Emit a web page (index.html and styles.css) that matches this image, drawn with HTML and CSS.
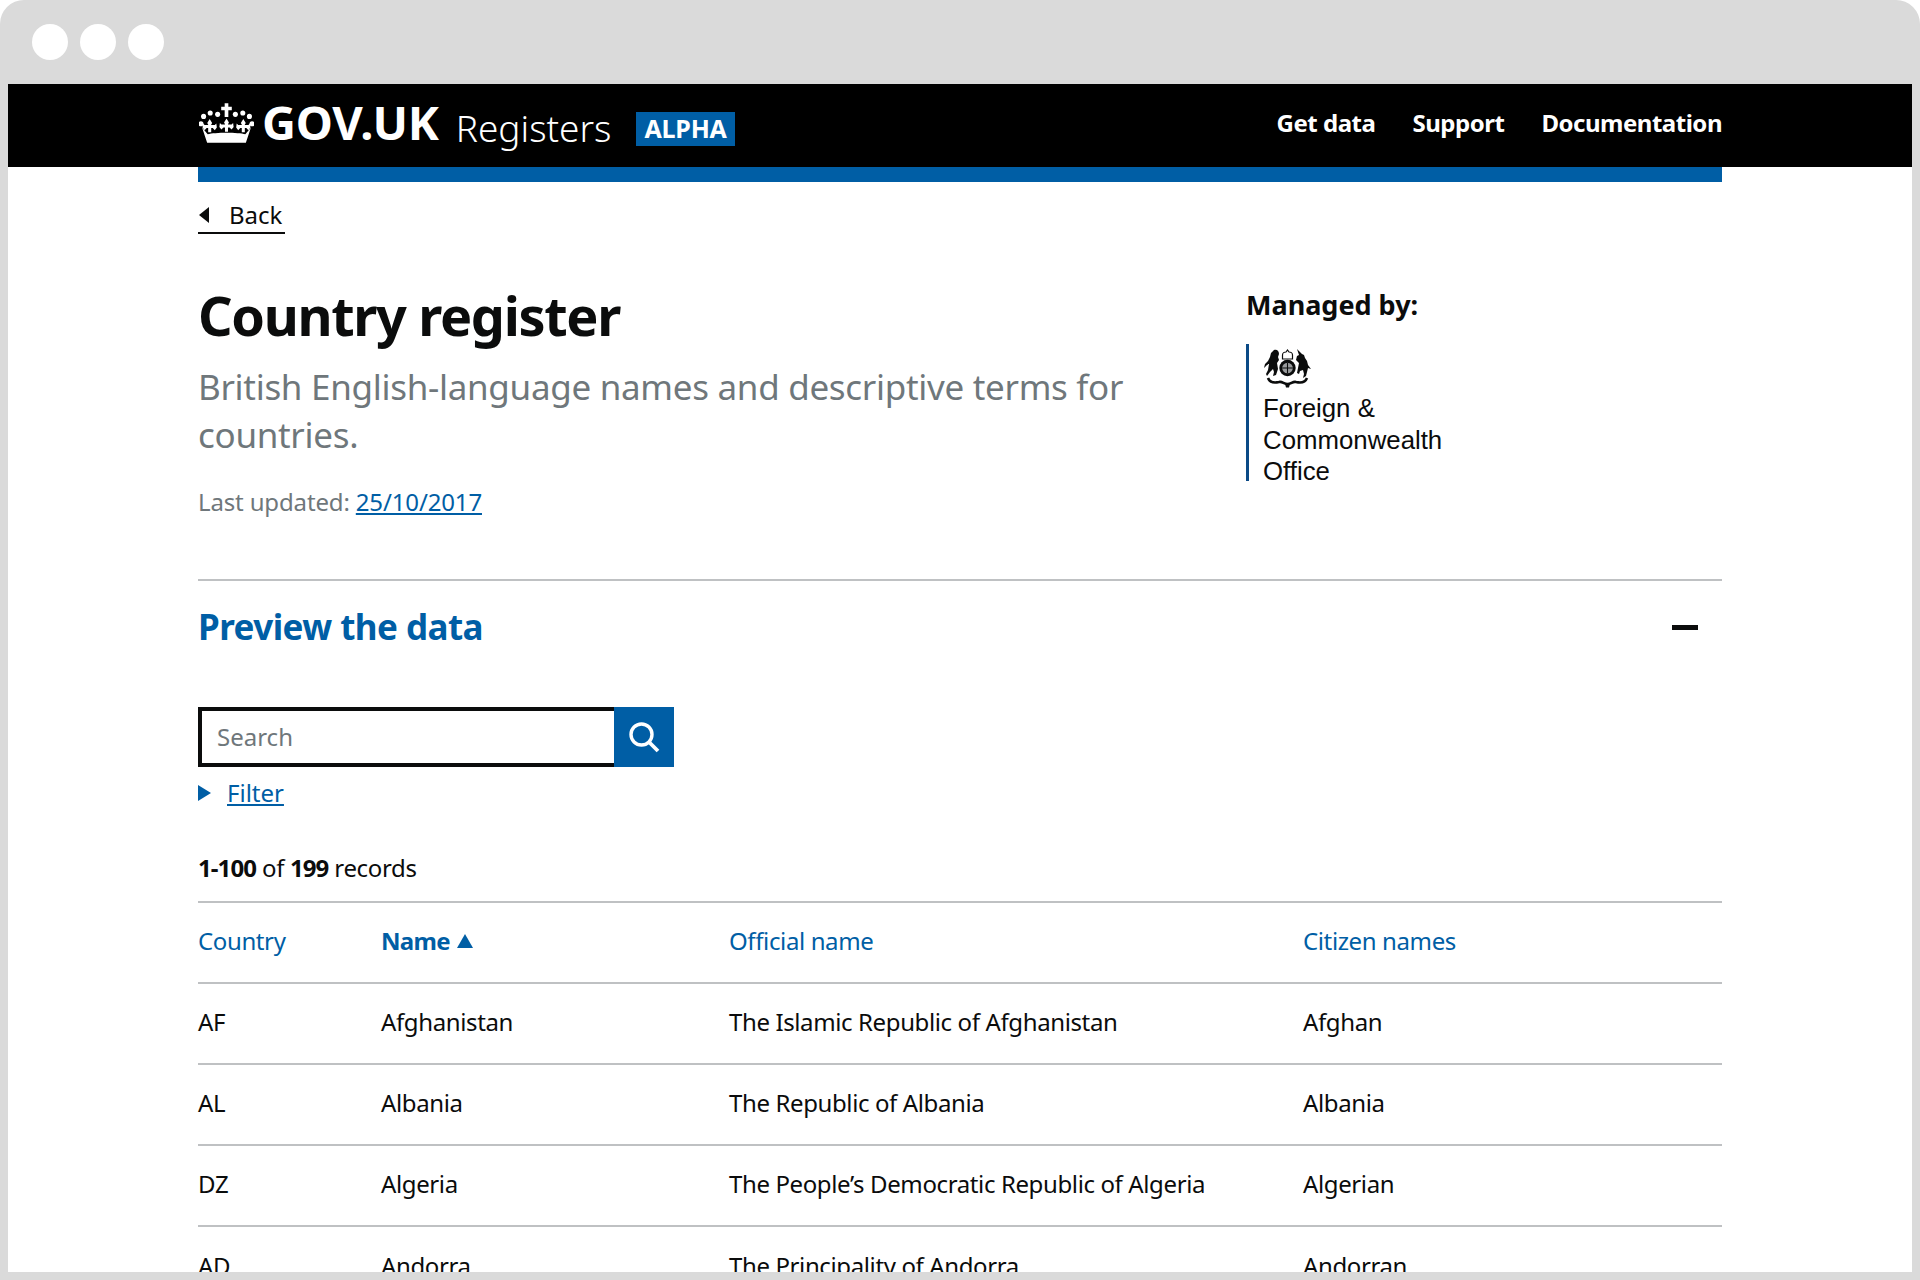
FILE: index.html
```html
<!DOCTYPE html>
<html lang="en">
<head>
  <meta charset="UTF-8">
  <title>Country register</title>
  <link rel="stylesheet" href="styles.css">
</head>
<body>
  <div class="window">
    <div class="window-bar">
      <span class="dot"></span><span class="dot"></span><span class="dot"></span>
    </div>
    <div class="window-page">
      <header class="site-header">
        <div class="header-inner">
          <a class="logo" href="#">
            <svg class="crown" viewBox="0 0 54 39" aria-hidden="true">
              <defs>
                <path id="fleur" d="M0 0l2.400 4-1.100 2H5l1.500-1.500.5 4-2 2.500-2-2H1.500v4h-3V9H-3l-2 2-2-2.500.5-4L-5 6H-1.300l-1.100-2z"/>
              </defs>
              <g fill="#fff">
                <path d="M25.200 0h3.600v3.600h3.400v3.400h-3.400v6.500h-3.600V7h-3.400V3.600h3.400z"/>
                <circle cx="1.900" cy="20.300" r="2.500"/><circle cx="52.100" cy="20.300" r="2.500"/>
                <circle cx="4.500" cy="13" r="2.500"/><circle cx="49.500" cy="13" r="2.500"/>
                <circle cx="11" cy="9.700" r="2.500"/><circle cx="43" cy="9.700" r="2.500"/>
                <circle cx="18.300" cy="11" r="2.500"/><circle cx="35.700" cy="11" r="2.500"/>
                <use href="#fleur" x="10.500" y="15.500"/>
                <use href="#fleur" x="27" y="15"/>
                <use href="#fleur" x="43.500" y="15.500"/>
                <path d="M3 24l5.500 6.500c7-2 30-2 37 0L51 24l-5 15H8z"/>
              </g>
            </svg>
            <span class="logo-text">GOV.UK</span>
          </a>
          <span class="product-name">Registers</span>
          <span class="phase-tag">ALPHA</span>
          <nav class="site-nav">
            <a href="#">Get data</a>
            <a href="#">Support</a>
            <a href="#">Documentation</a>
          </nav>
        </div>
      </header>

      <main class="wrapper">
        <div class="blue-bar"></div>
        <a class="back-link" href="#">Back</a>

        <div class="intro">
          <div class="intro-main">
            <h1>Country register</h1>
            <p class="lede">British English-language names and descriptive terms for countries.</p>
            <p class="updated">Last updated: <a href="#">25/10/2017</a></p>
          </div>
          <div class="intro-side">
            <h2 class="managed">Managed by:</h2>
            <div class="org">
              <svg class="crest" viewBox="0 0 49 40" aria-hidden="true">
                <!-- lion -->
                <path fill="#0b0c0c" d="M11 2c3-1 5 1 5 4l-1 3 1 3-2 3 1 6-2 6-3 1 1-4-1-3-3 3-3 4-1-2 2-4 1-6-2 1-3 3 1-4 3-3 2-4 1-4z"/>
                <!-- unicorn -->
                <path fill="#0b0c0c" d="M34 1l5 5 2 1 1 3 2 3 1 4 3 4-3-1-1 4-1 4-3 2 1-4-1-4-3 1-1 3-2-1 1-5 1-5-3-3 1-4 2-1z"/>
                <!-- crown -->
                <path fill="#fff" stroke="#0b0c0c" stroke-width="1.200" d="M19.500 11V7c0-2 2-3 3.500-3l1.500-2 1.500 2c1.500 0 3.500 1 3.500 3v4z"/>
                <!-- shield -->
                <circle cx="24.500" cy="20" r="8.200" fill="#0b0c0c"/>
                <circle cx="24.500" cy="20" r="5.300" fill="#9a9c9e"/>
                <path stroke="#0b0c0c" stroke-width="1.100" d="M24.500 14.700v10.600M19.200 20h10.600"/>
                <!-- motto ribbon -->
                <path fill="none" stroke="#0b0c0c" stroke-width="2.600" d="M5 30c2 5 7 5 11 4 3-1 5 2 8.500 2s5.500-3 8.500-2c4 1 9 1 11-4"/>
                <path fill="#0b0c0c" d="M22 36h5l-1 3.500h-3z"/>
              </svg>
              <span class="org-name">Foreign &amp;<br>Commonwealth<br>Office</span>
            </div>
          </div>
        </div>

        <section class="preview">
          <div class="preview-head">
            <h2><a href="#">Preview the data</a></h2>
            <span class="minus"></span>
          </div>

          <form class="search">
            <input class="search-input" type="text" placeholder="Search">
            <button class="search-btn" type="button" aria-label="Search">
              <svg viewBox="0 0 32 32" width="32" height="32" aria-hidden="true">
                <circle cx="13.500" cy="13.500" r="10.500" fill="none" stroke="#fff" stroke-width="3.400"/>
                <path d="M21 21l9 9" stroke="#fff" stroke-width="3.800"/>
              </svg>
            </button>
          </form>

          <div class="filter"><span class="arrow-right"></span><a href="#">Filter</a></div>

          <p class="count"><b>1-100</b> of <b>199</b> records</p>

          <table class="records">
            <colgroup>
              <col class="col-a"><col class="col-b"><col class="col-c"><col class="col-d">
            </colgroup>
            <thead>
              <tr>
                <th><a href="#">Country</a></th>
                <th><a class="sorted" href="#">Name <span class="arrow-up"></span></a></th>
                <th><a href="#">Official name</a></th>
                <th><a href="#">Citizen names</a></th>
              </tr>
            </thead>
            <tbody>
              <tr><td>AF</td><td>Afghanistan</td><td>The Islamic Republic of Afghanistan</td><td>Afghan</td></tr>
              <tr><td>AL</td><td>Albania</td><td>The Republic of Albania</td><td>Albania</td></tr>
              <tr><td>DZ</td><td>Algeria</td><td>The People’s Democratic Republic of Algeria</td><td>Algerian</td></tr>
              <tr><td>AD</td><td>Andorra</td><td>The Principality of Andorra</td><td>Andorran</td></tr>
            </tbody>
          </table>
        </section>
      </main>
    </div>
  </div>
</body>
</html>
```

FILE: styles.css
```css
* {
  box-sizing: border-box;
}

html, body {
  margin: 0;
  height: 1280px;
  background: #fff;
  overflow: hidden;
}

body {
  color: #0b0c0c;
  font-family: "Noto Sans", "Open Sans", sans-serif;
  font-size: 24px;
}

a {
  color: #005ea5;
}

.window {
  height: 1280px;
  padding: 0 8px 8px;
  background: #dadada;
  border-radius: 24px 24px 0 0;
  display: flex;
  flex-direction: column;
  overflow: hidden;
}

.window-bar {
  height: 84px;
  flex: none;
  margin-left: -8px;
  padding: 24px 0 0 32px;
  display: flex;
  gap: 12px;
}

.dot {
  width: 36px;
  height: 36px;
  background: #fff;
  border-radius: 50%;
}

.window-page {
  flex: 1;
  background: #fff;
  overflow: hidden;
}

.site-header {
  height: 83px;
  background: #000;
}

.header-inner {
  width: 1524px;
  height: 83px;
  margin-left: 190px;
  display: flex;
  align-items: flex-start;
}

.logo {
  display: flex;
  color: #fff;
  text-decoration: none;
}

.crown {
  width: 55px;
  height: 40px;
  margin: 19px 0 0 1px;
}

.logo-text {
  margin: 6px 0 0 8px;
  font-size: 47px;
  line-height: 64px;
  font-weight: 700;
  letter-spacing: -0.2px;
}

.product-name {
  margin: 19px 0 0 17px;
  color: #fff;
  font-size: 37px;
  line-height: 50px;
  font-weight: 300;
}

.phase-tag {
  margin: 28px 0 0 25px;
  padding: 0 8px;
  height: 34px;
  background: #005ea5;
  color: #fff;
  font-size: 25px;
  line-height: 32px;
  font-weight: 700;
  letter-spacing: -0.2px;
}

.site-nav {
  margin-left: auto;
  padding-top: 22px;
  display: flex;
  gap: 37px;
}

.site-nav a {
  color: #fff;
  font-size: 24px;
  line-height: 33px;
  font-weight: 700;
  letter-spacing: -0.48px;
  text-decoration: none;
}

.wrapper {
  width: 1524px;
  margin-left: 190px;
}

.blue-bar {
  height: 15px;
  background: #005ea5;
}

.back-link {
  display: inline-block;
  margin-top: 16px;
  padding: 0 3px 1px 31px;
  position: relative;
  color: #0b0c0c;
  font-size: 24px;
  line-height: 33px;
  text-decoration: none;
  border-bottom: 2px solid #0b0c0c;
}

.back-link::before {
  content: "";
  position: absolute;
  left: 1px;
  top: 9px;
  border-style: solid;
  border-width: 8px 10px 8px 0;
  border-color: transparent #0b0c0c transparent transparent;
}

.intro {
  display: flex;
  margin-top: 46px;
}

.intro-main {
  width: 1048px;
}

h1 {
  margin: 0;
  font-size: 54px;
  line-height: 70px;
  font-weight: 700;
  letter-spacing: -1.35px;
}

.lede {
  margin: 13px 0 0;
  color: #6f777b;
  font-size: 35px;
  line-height: 48px;
  letter-spacing: -0.3px;
}

.updated {
  margin: 26px 0 0;
  color: #6f777b;
  font-size: 24px;
  line-height: 33px;
  letter-spacing: -0.15px;
}

.intro-side {
  flex: 1;
  padding-top: 6px;
}

.managed {
  margin: 0;
  font-size: 27px;
  line-height: 38px;
  font-weight: 700;
}

.org {
  margin-top: 20px;
  padding: 4px 0 0 14px;
  border-left: 3px solid #0b4a86;
  height: 137px;
}

.crest {
  display: block;
  width: 49px;
  height: 40px;
}

.org-name {
  display: block;
  margin-top: 5px;
  font-family: "Liberation Sans", sans-serif;
  font-size: 25.800px;
  line-height: 31.500px;
}

.preview {
  margin-top: 61px;
  border-top: 2px solid #bfc1c3;
}

.preview-head {
  display: flex;
  align-items: center;
  justify-content: space-between;
  height: 93px;
}

.preview-head h2 {
  margin: 0 0 2px;
  font-size: 35px;
  line-height: 48px;
  font-weight: 700;
  letter-spacing: -0.55px;
}

.preview-head a {
  text-decoration: none;
}

.minus {
  width: 26px;
  height: 5px;
  margin-right: 24px;
  background: #0b0c0c;
}

.search {
  display: flex;
  margin-top: 33px;
}

.search-input {
  width: 416px;
  height: 60px;
  padding: 0 15px 2px;
  border: 4px solid #0b0c0c;
  border-right: 0;
  border-radius: 0;
  outline: none;
  font: inherit;
  color: #0b0c0c;
}

.search-input::placeholder {
  color: #6f777b;
  opacity: 1;
}

.search-btn {
  width: 60px;
  height: 60px;
  padding: 0;
  background: #005ea5;
  border: 0;
  display: flex;
  align-items: center;
  justify-content: center;
}

.filter {
  display: flex;
  align-items: center;
  margin-top: 7px;
  line-height: 37px;
}

.arrow-right {
  margin-right: 16px;
  border-style: solid;
  border-width: 8px 0 8px 13px;
  border-color: transparent transparent transparent #005ea5;
}

.count {
  margin: 40px 0 0;
  line-height: 33px;
  letter-spacing: -0.35px;
}

.count b {
  font-weight: 700;
  letter-spacing: -0.9px;
}

.records {
  width: 100%;
  margin-top: 17px;
  border-collapse: collapse;
  table-layout: fixed;
  letter-spacing: -0.38px;
}

.col-a { width: 183px; }
.col-b { width: 348px; }
.col-c { width: 574px; }

.records th,
.records td {
  height: 81px;
  padding: 0 0 4px;
  text-align: left;
  font-weight: 400;
  border-top: 2px solid #bfc1c3;
}

.records th a {
  text-decoration: none;
}

.records th a.sorted {
  font-weight: 700;
  letter-spacing: -0.7px;
}

.arrow-up {
  display: inline-block;
  margin-left: 2px;
  vertical-align: 2px;
  border-style: solid;
  border-width: 0 8px 14px 8px;
  border-color: transparent transparent #005ea5 transparent;
}
```
